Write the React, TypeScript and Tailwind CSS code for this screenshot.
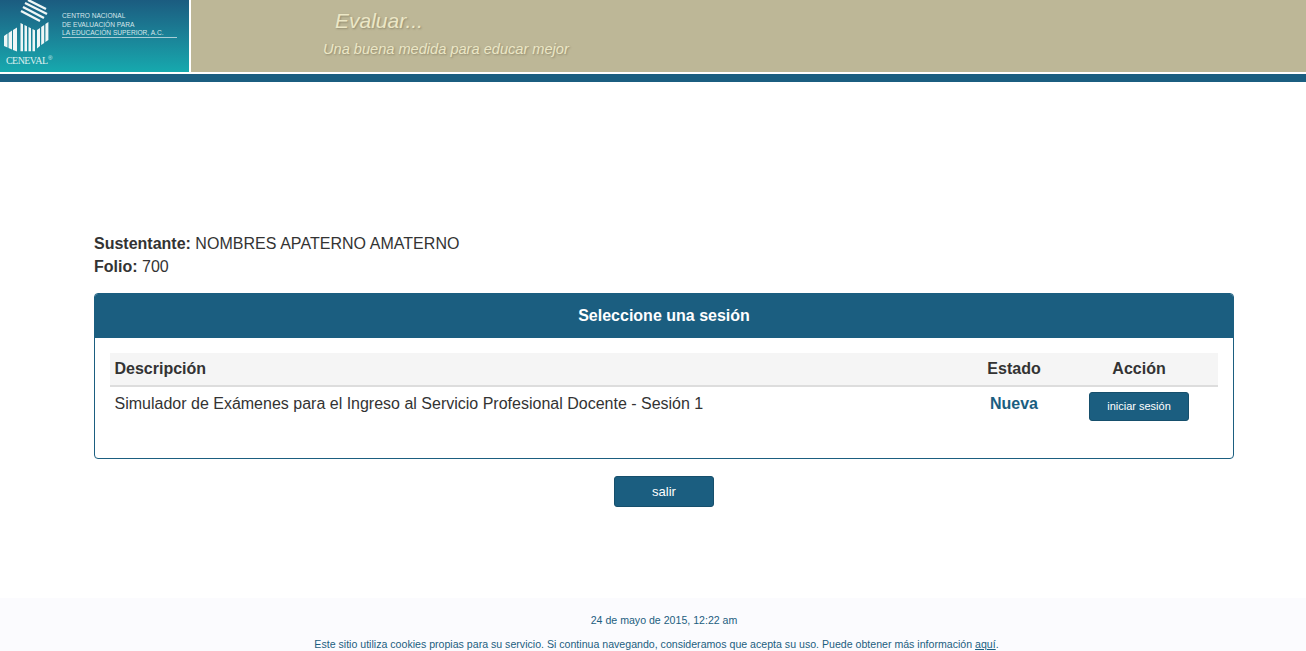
export default function App() {
  return (
    <div className="min-h-[651px] h-[651px] overflow-hidden bg-white flex flex-col font-['Liberation_Sans',Arial,sans-serif] text-[#333333]">
      <header className="shrink-0">
        <div className="flex h-[72px] bg-[#bdb797]">
          <div className="w-[189px] bg-gradient-to-b from-[#1b5c80] to-[#16a9ae] flex">
            <svg width="56" height="72" viewBox="0 0 56 72" className="shrink-0">
              <g stroke="#eef6f6" fill="none" strokeWidth="2.4">
                <path d="M28 0 L46 9 M25 3 L47 14 M23 7 L44 18 M21 11 L40 21" />
              </g>
              <g fill="#eef6f6">
                <path d="M4 36 l3.5 -2.5 v14 l-3.5 -1.5z M8.5 33 l3.5 -2.5 v19 l-3.5 -1.5z M13 30 l4 -2.5 v24 l-4 -1.5z" />
                <path d="M20.5 23 l2.5 1.2 v27 h-2.5z M24.5 25 l2.5 1.2 v25 h-2.5z M28.5 27 l2.5 1.2 v23 h-2.5z M32.5 29 l2.5 1.2 v21 h-2.5z" />
                <path d="M37 30 l3 -2 v18 l-3 2.5z M41.2 27 l3 -2 v18 l-3 2z M45.4 24 l3 -2 v18 l-3 2z" />
              </g>
              <text x="6" y="64" fontFamily="'Liberation Serif', serif" fontSize="10" fill="#dcefef" textLength="42">CENEVAL</text>
              <text x="48" y="60" fontFamily="'Liberation Sans', sans-serif" fontSize="6" fill="#dcefef">®</text>
            </svg>
            <div className="ml-[6px] mt-[12px] text-[6.6px] leading-[8.5px] text-[#d5e6ea] whitespace-nowrap">
              <div>CENTRO NACIONAL</div>
              <div>DE EVALUACIÓN PARA</div>
              <div className="h-[9px] border-b border-[#a9cdd6] w-[115px]">LA EDUCACIÓN SUPERIOR, A.C.</div>
            </div>
          </div>
          <div className="w-[2px] bg-white" />
          <div className="pt-[9px] text-[#ece7c6] italic [text-shadow:1px_1px_2px_rgba(90,85,60,0.45)]">
            <div className="ml-[144px] text-[21px] leading-[24px]">Evaluar...</div>
            <div className="ml-[132px] mt-[6px] text-[14.6px] leading-[20px]">Una buena medida para educar mejor</div>
          </div>
        </div>
        <div className="h-[2px] bg-white" />
        <div className="h-[8px] bg-[#1b5e80]" />
      </header>

      <main className="flex-1 pl-[94px] pr-[72px] pt-[150px]">
        <p className="text-base leading-[23px]"><b>Sustentante:</b> <span className="tracking-[0.04px]">NOMBRES APATERNO AMATERNO</span></p>
        <p className="text-base leading-[23px]"><b>Folio:</b> 700</p>

        <section className="mt-[15px] h-[166px] border border-[#1b5e80] rounded-[4px] overflow-hidden">
          <h2 className="h-[44px] bg-[#1b5e80] text-white text-base font-bold flex items-center justify-center">Seleccione una sesión</h2>
          <div className="px-[15px] pt-[15px]">
            <table className="w-full table-fixed border-collapse">
              <thead>
                <tr className="bg-[#f5f5f5] border-b-2 border-[#dddddd] h-[33px] text-base">
                  <th className="text-left pl-[4.5px] font-bold">Descripción</th>
                  <th className="w-[92px] font-bold">Estado</th>
                  <th className="w-[158px] font-bold">Acción</th>
                </tr>
              </thead>
              <tbody>
                <tr className="align-top text-base">
                  <td className="pl-[4.5px] pt-[5px]">Simulador de Exámenes para el Ingreso al Servicio Profesional Docente - Sesión 1</td>
                  <td className="pt-[5px] text-center font-bold text-[#1b5e80]">Nueva</td>
                  <td className="pt-[5px] text-center">
                    <button className="w-[100px] h-[29px] bg-[#1b5e80] text-white text-[11px] rounded-[3px] border border-[#164f6c]">iniciar sesión</button>
                  </td>
                </tr>
              </tbody>
            </table>
          </div>
        </section>

        <div className="mt-[17px] flex justify-center">
          <button className="w-[100px] h-[31px] bg-[#1b5e80] text-white text-[13px] rounded-[3px] border border-[#164f6c]">salir</button>
        </div>
      </main>

      <footer className="h-[53px] shrink-0 bg-[#fbfbfe] text-center text-[10.6px] text-[#1b5e80] pt-[15px] leading-[14px]">
        <div className="pl-[22px]">24 de mayo de 2015, 12:22 am</div>
        <div className="mt-[10px] pl-[7px]">
          Este sitio utiliza cookies propias para su servicio. Si continua navegando, consideramos que acepta su uso. Puede obtener más información <a className="underline" href="#">aquí</a>.
        </div>
      </footer>
    </div>
  );
}
